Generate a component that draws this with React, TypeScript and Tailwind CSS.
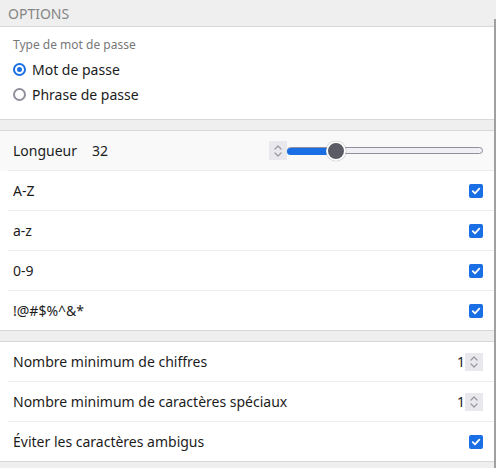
import React from "react";

const font = { fontFamily: '"Noto Sans", "Open Sans", sans-serif' };

function Spinner({ h = 19 }: { h?: number }) {
  return (
    <div
      className={`flex w-[18px] items-center justify-center bg-[#e9e9ed] ${h === 19 ? "h-[19px]" : "h-[18px]"}`}
    >
      <svg width="10" height="14" viewBox="0 0 10 14" fill="none">
        <path d="M2 5 L5 2 L8 5" stroke="#9a9aa2" strokeWidth="1.3" strokeLinecap="round" strokeLinejoin="round" />
        <path d="M2 9 L5 12 L8 9" stroke="#9a9aa2" strokeWidth="1.3" strokeLinecap="round" strokeLinejoin="round" />
      </svg>
    </div>
  );
}

function Check() {
  return (
    <div className="flex h-[14px] w-[14px] items-center justify-center rounded-[2px] bg-[#1b6fe4]">
      <svg width="10" height="10" viewBox="0 0 10 10" fill="none">
        <path d="M1.8 5.2 L4 7.3 L8.3 2.6" stroke="white" strokeWidth="1.8" strokeLinecap="round" strokeLinejoin="round" />
      </svg>
    </div>
  );
}

function Row({ label, right, last, bg }: { label: React.ReactNode; right: React.ReactNode; last?: boolean; bg?: boolean }) {
  return (
    <div className={bg ? "bg-[#f9f9fa]" : "bg-white"}>
      <div className="flex h-[39px] items-center justify-between pl-[13px] pr-[13px]">
        <div className="text-[14px] text-[#1c1c1c]">{label}</div>
        {right}
      </div>
      {!last && <div className="ml-[8px] h-px bg-[#ececec]" />}
    </div>
  );
}

export default function App() {
  return (
    <div className="relative h-[468px] w-[496px] overflow-hidden bg-[#efefef]" style={font}>
      <div className="flex h-[26px] items-center px-[8px] text-[14px] text-[#858585]">OPTIONS</div>
      <div className="h-px bg-[#d8d8d8]" />
      <div className="h-[92px] bg-white pl-[13px] pt-[10px]">
        <div className="flex h-[16px] items-center text-[12px] leading-none text-[#787878]">Type de mot de passe</div>
        <div className="mt-[4px] flex h-[25px] items-center gap-[6px]">
          <div className="flex h-[13px] w-[13px] items-center justify-center rounded-full border-[2px] border-[#1b6fe4] bg-white">
            <div className="h-[5px] w-[5px] rounded-full bg-[#1b6fe4]" />
          </div>
          <span className="text-[14px] text-[#1c1c1c]">Mot de passe</span>
        </div>
        <div className="flex h-[25px] items-center gap-[6px]">
          <div className="h-[13px] w-[13px] rounded-full border-[2px] border-[#8f8f9d] bg-white" />
          <span className="text-[14px] text-[#1c1c1c]">Phrase de passe</span>
        </div>
      </div>
      <div className="h-px bg-[#d8d8d8]" />
      <div className="h-[10px]" />
      <div className="h-px bg-[#d8d8d8]" />
      <Row
        bg
        label={
          <span className="flex gap-[15px]">
            <span>Longueur</span>
            <span>32</span>
          </span>
        }
        right={
          <div className="flex items-center">
            <Spinner />
            <div className="relative flex h-[20px] w-[196px] items-center">
              <div className="h-[7px] w-full rounded-full border border-[#8f8f9d] bg-[#f0f0f4]" />
              <div className="absolute left-0 top-[7px] h-[7px] w-[48px] rounded-l-full bg-[#1b6fe4]" />
              <div className="absolute left-[39px] top-0 h-[20px] w-[20px] rounded-full border-[2px] border-white bg-[#5b5b66] shadow-[0_0_1px_rgba(0,0,0,0.5)]" />
            </div>
          </div>
        }
      />
      <Row label="A-Z" right={<Check />} />
      <Row label="a-z" right={<Check />} />
      <Row label="0-9" right={<Check />} />
      <Row label="!@#$%^&*" right={<Check />} last />
      <div className="h-px bg-[#d8d8d8]" />
      <div className="h-[10px]" />
      <div className="h-px bg-[#d8d8d8]" />
      <Row
        label="Nombre minimum de chiffres"
        right={
          <div className="flex items-center">
            <span className="text-[14px] text-[#1c1c1c]">1</span>
            <Spinner h={18} />
          </div>
        }
      />
      <Row
        label="Nombre minimum de caractères spéciaux"
        right={
          <div className="flex items-center">
            <span className="text-[14px] text-[#1c1c1c]">1</span>
            <Spinner h={18} />
          </div>
        }
      />
      <Row label="Éviter les caractères ambigus" right={<Check />} last />
      <div className="h-px bg-[#d8d8d8]" />
      <div className="absolute bottom-0 right-0 top-[19px] w-[2px] bg-[#a0a0a0]" />
    </div>
  );
}
